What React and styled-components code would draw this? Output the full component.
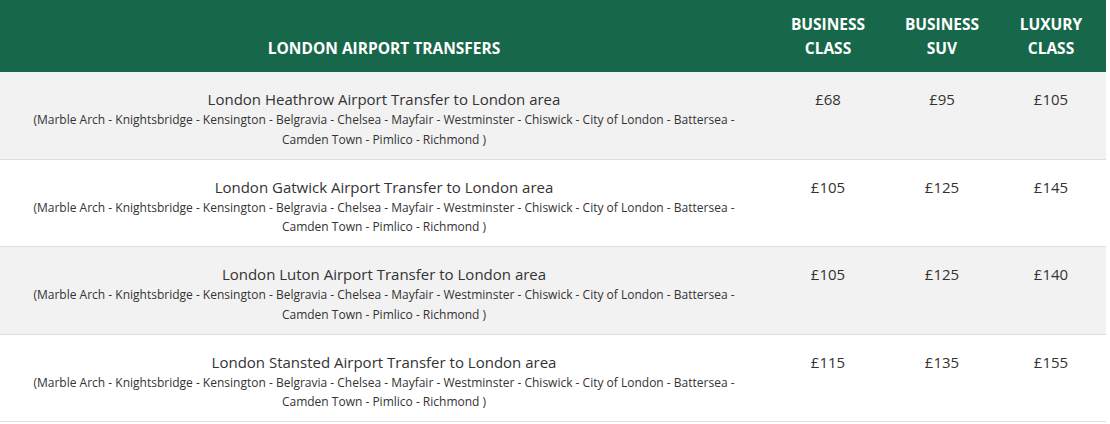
import React from 'react';
import styled, { createGlobalStyle } from 'styled-components';

const GlobalStyle = createGlobalStyle`
  html, body {
    margin: 0;
    padding: 0;
    background: #ffffff;
  }
  body {
    font-family: "Open Sans", "Noto Sans", sans-serif;
    color: #333333;
  }
`;

const areas = '(Marble Arch - Knightsbridge - Kensington - Belgravia - Chelsea - Mayfair - Westminster - Chiswick - City of London - Battersea - Camden Town - Pimlico - Richmond )';

const transfers = [
  { name: 'London Heathrow Airport Transfer to London area', prices: ['£68', '£95', '£105'] },
  { name: 'London Gatwick Airport Transfer to London area', prices: ['£105', '£125', '£145'] },
  { name: 'London Luton Airport Transfer to London area', prices: ['£105', '£125', '£140'] },
  { name: 'London Stansted Airport Transfer to London area', prices: ['£115', '£135', '£155'] },
];

function App() {
  return (
    <>
      <GlobalStyle />
      <Table>
        <colgroup>
          <col style={{ width: 768 }} />
          <col style={{ width: 120 }} />
          <col style={{ width: 108 }} />
          <col style={{ width: 110 }} />
        </colgroup>
        <thead>
          <tr>
            <HeadCell>LONDON AIRPORT TRANSFERS</HeadCell>
            <HeadCell>BUSINESS<br />CLASS</HeadCell>
            <HeadCell>BUSINESS<br />SUV</HeadCell>
            <HeadCell>LUXURY<br />CLASS</HeadCell>
          </tr>
        </thead>
        <tbody>
          {transfers.map((t, i) => (
            <Row key={t.name} $striped={i % 2 === 0}>
              <RouteCell>
                <RouteName>{t.name}</RouteName>
                <Areas>{areas}</Areas>
              </RouteCell>
              {t.prices.map((p, j) => (
                <PriceCell key={j}>{p}</PriceCell>
              ))}
            </Row>
          ))}
        </tbody>
      </Table>
    </>
  );
}

export default App;

const Table = styled.table`
  width: 1106px;
  border-collapse: collapse;
  table-layout: fixed;
`;

const HeadCell = styled.th`
  background-color: #17684a;
  color: #ffffff;
  font-size: 15.5px;
  font-weight: 700;
  line-height: 24px;
  text-align: center;
  vertical-align: bottom;
  padding: 12px 6px 12px;
  height: 48px;
`;

const Row = styled.tr`
  background-color: ${p => (p.$striped ? '#f2f2f2' : '#ffffff')};
  border-bottom: 1px solid #dedede;
`;

const RouteCell = styled.td`
  text-align: center;
  vertical-align: top;
  padding: 16px 16px 9.5px;
`;

const RouteName = styled.div`
  font-size: 15px;
  line-height: 22px;
  color: #333333;
`;

const Areas = styled.div`
  font-size: 12px;
  line-height: 19.5px;
  color: #333333;
  padding: 0 4px;
`;

const PriceCell = styled.td`
  text-align: center;
  vertical-align: top;
  padding: 16px 8px 9.5px;
  font-size: 15px;
  line-height: 22px;
  color: #333333;
`;
